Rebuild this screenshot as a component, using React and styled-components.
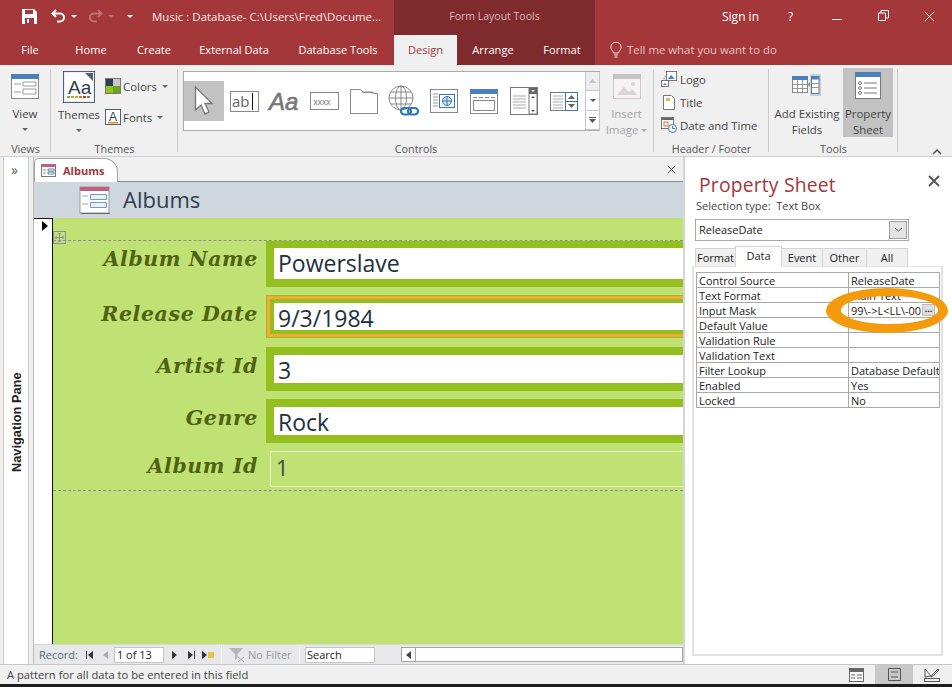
import React from "react";
import styled, { createGlobalStyle } from "styled-components";

const Global = createGlobalStyle`
  html, body { margin: 0; padding: 0; background: #f0f0f0; overflow: hidden; }
  * { box-sizing: border-box; }
  #root { width: 952px; height: 687px; }
`;
const Shell = styled.div`
  width: 952px; height: 687px; display: flex; flex-direction: column; overflow: hidden;
  font-family: "Open Sans", "Noto Sans", "Liberation Sans", sans-serif; font-size: 11.4px; color: #444;
  background: #f0f0f0; border-bottom: 3px solid #1c1c1c;
`;
const Title = styled.div`
  height: 35px; flex: none; background: #a4373a; display: flex; align-items: center; color: #fff; position: relative;
`;
const QuickAccess = styled.div`
  width: 152px; flex: none; display: flex; align-items: center; height: 100%; padding: 0 0 3px 22px;
`;
const FileName = styled.div`
  width: 242px; flex: none; font-size: 11.5px; color: #f6e9e9; white-space: nowrap; padding-bottom: 3px;
`;
const ContextTitle = styled.div`
  width: 201px; flex: none; height: 100%; background: #7f2a2d; color: #d9bcbd; font-size: 10.5px; padding-bottom: 3px;
  display: flex; align-items: center; justify-content: center;
`;
const TitleRight = styled.div`
  flex: 1; display: flex; align-items: center; height: 100%; padding: 0 0 3px 127px; color: #fff;
`;
const TitleText = styled.div`
  width: ${p => p.$w}px; flex: none; font-size: 12px;
`;
const TabsBar = styled.div`
  height: 30px; flex: none; background: #a4373a; display: flex; align-items: stretch;
`;
const Tab = styled.div`
  width: ${p => p.$w}px; flex: none; display: flex; align-items: center; justify-content: center;
  font-size: 11.1px; padding-bottom: 1px;
  color: ${p => (p.$active ? "#a4373a" : "#fff")};
  background: ${p => (p.$active ? "#f0f0f0" : p.$context ? "#7f2a2d" : "transparent")};
`;
const TellMe = styled.div`
  display: flex; align-items: center; gap: 5px; padding-left: 15px; color: #e3c5c6; font-size: 11.4px; padding-bottom: 1px;
`;
const Ribbon = styled.div`
  height: 92px; flex: none; display: flex; background: #f0f0f0; border-bottom: 1px solid #d0d0d0; position: relative;
`;
const Group = styled.div`
  width: ${p => p.$w}px; flex: none; position: relative; display: flex; flex-direction: column; padding-top: 3px;
  &::after { content: ""; position: absolute; right: 0; top: 4px; bottom: 4px; width: 1px; background: #c9c9c9; }
`;
const GroupBody = styled.div`
  flex: 1; display: flex; min-height: 0;
`;
const GroupLabel = styled.div`
  height: 15px; flex: none; text-align: center; font-size: 10.8px; color: #555; line-height: 15px;
`;
const BigButton = styled.div`
  width: ${p => p.$w}px; height: 69px; margin-left: ${p => p.$ml || 0}px; flex: none; display: flex; flex-direction: column; align-items: center;
  padding-top: ${p => p.$pt ?? 3}px; font-size: 11.4px; line-height: 15.5px; text-align: center; white-space: nowrap;
  color: ${p => (p.$off ? "#a5a5a5" : "#444")};
  background: ${p => (p.$on ? "#c2c2c2" : "transparent")};
  svg { flex: none; margin-bottom: ${p => p.$mb ?? 7}px; }
`;
const Caret = styled.span`
  display: inline-block; width: 0; height: 0; border-left: 3px solid transparent; border-right: 3px solid transparent;
  border-top: 3px solid ${p => p.$c || "#666"}; vertical-align: middle; margin-left: ${p => p.$ml ?? 3}px;
  margin-top: ${p => p.$mt || 0}px;
`;
const ThemeSide = styled.div`
  display: flex; flex-direction: column; gap: 13px; padding: 9px 0 0 1px;
`;
const SmallAction = styled.div`
  display: flex; align-items: center; gap: ${p => p.$gap ?? 3}px; height: 18px; font-size: 11.4px; color: #444;
  padding-left: ${p => p.$pl || 0}px;
`;
const Gallery = styled.div`
  width: 417px; height: 60px; margin: 3px 0 0 5px; display: flex; background: #fff; border: 1px solid #aaa; border-right: none; flex: none;
`;
const GalleryItem = styled.div`
  width: 40px; height: 40px; margin-top: 9px; flex: none; display: flex; align-items: center; justify-content: center;
  background: ${p => (p.$on ? "#c2c2c2" : "transparent")};
`;
const GalleryScroll = styled.div`
  width: 15px; flex: none; margin-left: 1px; display: flex; flex-direction: column; border: 1px solid #c6c6c6; border-width: 0 1px;
`;
const ScrollStep = styled.div`
  flex: 1; display: flex; align-items: center; justify-content: center; border-bottom: 1px solid #c6c6c6;
  background: ${p => (p.$off ? "#ededed" : "#fff")};
`;
const HeaderList = styled.div`
  display: flex; flex-direction: column; gap: 5px; padding: 2px 0 0 7px;
`;
const Collapse = styled.div`
  position: absolute; right: 10px; bottom: 3px; width: 10px; height: 10px;
`;
const Main = styled.div`
  flex: 1; min-height: 0; display: flex; background: #fff;
`;
const NavPane = styled.div`
  width: 34px; flex: none; display: flex; background: #f0f0f0;
`;
const NavInner = styled.div`
  width: 26px; margin-left: 3px; background: #fff; border-left: 1px solid #c6c6c6; border-right: 1px solid #c6c6c6;
  display: flex; flex-direction: column; align-items: center; position: relative;
`;
const NavChevron = styled.div`
  height: 24px; display: flex; align-items: center; color: #666; font-size: 14px; margin-left: -3px;
`;
const NavLabel = styled.div`
  flex: 1; display: flex; align-items: center; justify-content: center; writing-mode: vertical-rl; transform: rotate(180deg);
  font-weight: 700; font-size: 12.8px; color: #222; font-family: "Liberation Sans", sans-serif;
`;
const Doc = styled.div`
  width: 652px; flex: none; display: flex; flex-direction: column; min-width: 0; border-right: 2px solid #d5d5d5; border-left: 1px solid #b9b9b9; margin-left: -1px;
`;
const DocTabs = styled.div`
  height: 25px; flex: none; display: flex; align-items: flex-end; background: #f0f0f0; border-bottom: 1px solid #8c8c8c; position: relative;
`;
const DocTab = styled.div`
  width: 84px; height: 24px; margin-bottom: -1px; background: #fff; border: 1px solid #a5a5a5; border-bottom: none; border-radius: 5px 14px 0 0;
  display: flex; align-items: center; gap: 7px; padding-left: 6px; color: #a4373a; font-weight: 700; font-size: 11px;
`;
const DocClose = styled.div`
  position: absolute; right: 7px; top: 8px; width: 9px; height: 9px;
`;
const FormHeader = styled.div`
  height: 36px; flex: none; background: #cdd7dd; display: flex; align-items: center; padding-left: 45px; gap: 13px;
  color: #2f3e50;
`;
const FormHeaderText = styled.span`
  font-size: 22px; line-height: 30px; margin-top: -2px;
`;
const FormArea = styled.div`
  flex: 1; min-height: 0; display: flex; overflow: hidden;
`;
const Selector = styled.div`
  width: 19px; flex: none; background: #fff; border-right: 1px solid #111; border-top: 1px solid #111; padding: 2px 0 0 8px;
`;
const Body = styled.div`
  flex: 1; background: #c0e274; padding-top: 22px; position: relative; min-width: 0; overflow: hidden;
`;
const MoveHandle = styled.div`
  position: absolute; left: 0; top: 13px; width: 13px; height: 13px; border: 1px solid #8d8da0; display: flex; align-items: center; justify-content: center;
`;
const Section = styled.div`
  height: 251px; border-top: 1px dashed #8d8da0; border-bottom: 1px dashed #8d8da0; display: flex; flex-direction: column;
`;
const Row = styled.div`
  display: flex; flex: none; height: ${p => p.$h}px; margin-top: ${p => p.$mt || 0}px;
`;
const FieldLabel = styled.div`
  width: 205px; flex: none; text-align: right; font-family: "DejaVu Serif", serif; font-weight: 700; font-style: italic;
  font-size: 20.5px; line-height: ${p => p.$lh}px; color: #4f6312; white-space: nowrap; letter-spacing: .6px;
`;
const Control = styled.div`
  margin-left: 8px; flex: 1; min-width: 0; background: #93c01f; padding: ${p => p.$pt ?? 8}px 0 8px 8px; display: flex;
`;
const FocusedControl = styled.div`
  margin-left: 8px; flex: 1; min-width: 0; background: #93c01f; padding: 1px 0 1px 1px; display: flex;
`;
const FocusRing = styled.div`
  flex: 1; min-width: 0; display: flex; border: 3px solid #f6a937; border-right: none; padding: 4px 0 4px 4px;
`;
const ControlInput = styled.div`
  flex: 1; background: #fff; padding: ${p => (p.$pb ? 0 : 2)}px 0 ${p => p.$pb || 0}px 4px; display: flex; align-items: center; font-size: 23px; color: #22303c;
`;
const PlainControl = styled.div`
  margin-left: 12px; flex: 1; border: 1px solid #e8f3cc; border-right: none; padding: 0 0 5px 5px; display: flex; align-items: center; font-size: 22px; color: #3f4a55;
`;
const RecordBar = styled.div`
  height: 20px; flex: none; background: #e6e8ea; display: flex; align-items: center; border-top: 1px solid #d9d9d9; color: #5a6a7e; font-size: 11px; padding-left: 5px;
`;
const RecordNav = styled.span`
  display: inline-flex; width: ${p => p.$w}px; margin-left: ${p => p.$ml || 0}px; justify-content: center; flex: none; color: ${p => p.$off ? "#aaa" : "#333"};
`;
const RecordBox = styled.div`
  width: 50px; height: 16px; background: #fff; border: 1px solid #c4c4c4; color: #222; font-size: 11px; padding-left: 2px; line-height: 14px; flex: none;
`;
const Sep = styled.div`
  width: 1px; height: 19px; background: #fff; margin: 0 ${p => p.$r ?? 6}px 0 ${p => p.$l ?? 6}px; flex: none;
`;
const NoFilter = styled.div`
  display: flex; align-items: center; gap: 2px; color: #9a9a9a; flex: none; font-size: 11px; width: 65px; white-space: nowrap;
`;
const SearchBox = styled.div`
  width: 70px; height: 16px; background: #fff; border: 1px solid #c4c4c4; color: #222; font-size: 11px; line-height: 14px; padding-left: 1px; flex: none;
`;
const HScroll = styled.div`
  margin-left: 26px; flex: 1; height: 15px; background: #fff; border: 1px solid #a5a5a5; display: flex; margin-right: 0;
`;
const HStep = styled.div`
  width: 14px; border-right: 1px solid #a5a5a5; display: flex; align-items: center; justify-content: center;
`;
const Sheet = styled.div`
  flex: 1; min-width: 0; position: relative; background: #fff; padding: 14px 0 0 7px; display: flex; flex-direction: column;
`;
const SheetTitle = styled.div`
  font-size: 19.3px; color: #a4373a; padding-left: 7px; line-height: 27px; letter-spacing: .2px;
`;
const SheetClose = styled.div`
  position: absolute; right: 12px; top: 18px; width: 12px; height: 12px;
`;
const SelectionType = styled.div`
  font-size: 11px; color: #444; padding-left: 4px; line-height: 15px; white-space: pre;
`;
const Combo = styled.div`
  width: 214px; height: 22px; margin: 6px 0 0 3px; border: 1px solid #a8a8a8; display: flex; align-items: center; justify-content: space-between; padding: 0 1px 1px 3px;
  font-size: 11px; color: #222;
`;
const ComboBtn = styled.div`
  width: 18px; height: 18px; border: 1px solid #a0a0a0; background: #e4e4e4; display: flex; align-items: center; justify-content: center;
`;
const SheetTabs = styled.div`
  display: flex; align-items: flex-end; height: 20px; margin: 5px 0 0 4px; position: relative; z-index: 1;
`;
const SheetTab = styled.div`
  width: ${p => p.$w}px; flex: none; height: ${p => (p.$on ? 21 : 18)}px; background: ${p => (p.$on ? "#fff" : "#f0f0f0")};
  border: 1px solid #d4d4d4; border-bottom: ${p => (p.$on ? "1px solid #fff" : "none")}; text-align: center; font-size: 11px; color: #222;
  line-height: 17px; margin-bottom: ${p => (p.$on ? -1 : 0)}px; margin-left: -1px;
`;
const SheetPanel = styled.div`
  width: 251px; height: 390px; border: 2px solid #e2e2e2; border-top-width: 1px; padding: 5px 2px 0 2px; background: #fff; flex: none;
`;
const PropTable = styled.table`
  border-collapse: collapse; width: 244px; table-layout: fixed; font-size: 11px; color: #222;
  td { height: 15px; padding: 0 0 0 2px; border: 1px solid #a8a8a8; white-space: nowrap; overflow: hidden; line-height: 13px; }
  td:first-child { width: 152px; }
`;
const MaskCell = styled.div`
  display: flex; align-items: center; justify-content: space-between; height: 13px; padding-right: 4px;
`;
const MaskDots = styled.span`
  width: 13px; height: 12px; background: #dedede; border: 1px solid #bbb; font-size: 9px; line-height: 7px; text-align: center; font-weight: 700;
`;
const Annotation = styled.svg`
  position: absolute; left: 130px; top: 125px; pointer-events: none;
`;
const Status = styled.div`
  height: 20px; flex: none; display: flex; align-items: center; justify-content: space-between; background: #f0f0f0; border-top: 1px solid #c6c6c6;
  font-size: 11.2px; color: #444; padding-left: 7px;
`;
const ViewButtons = styled.div`
  display: flex; height: 100%; padding-right: 1px;
`;
const ViewBtn = styled.div`
  width: ${p => p.$w}px; flex: none; display: flex; align-items: center; justify-content: center; background: ${p => p.$on ? "#c8c8c8" : "transparent"};
`;

const Save = () => (
  <svg width="15" height="15" viewBox="0 0 15 15"><path d="M0 0h12l3 3v12H0z" fill="#fff"/><path d="M3 1h8v4H3zM3 9h9v6H3z" fill="#a4373a"/><path d="M5 10h2v4H5z" fill="#fff"/></svg>
);
const Undo = ({ c = "#fff", flip }) => (
  <svg width="15" height="14" viewBox="0 0 15 14" style={flip ? { transform: "scaleX(-1)" } : undefined}><path d="M5 1 1.500 4.500 5 8M2 4.500h7a4 4 0 0 1 0 8H6" fill="none" stroke={c} strokeWidth="2"/></svg>
);
const FormIcon = () => (
  <svg width="28" height="25" viewBox="0 0 28 25"><rect x=".5" y=".5" width="27" height="24" fill="#fff" stroke="#8a8a8a"/><rect width="28" height="5" fill="#4a80bb"/><path d="M3 10h7M3 18h7" stroke="#9a9a9a"/><path d="M12 8h13v4H12zM12 15h13v5H12z" fill="none" stroke="#9a9a9a"/></svg>
);
const ThemeIcon = () => (
  <svg width="32" height="32" viewBox="0 0 32 32"><rect x=".5" y=".5" width="31" height="31" fill="#e8eef3" stroke="#51606e"/><rect x="2" y="2" width="28" height="28" fill="#fff"/><path d="M22 2h8v8z" fill="#51606e"/><text x="5" y="23" fontFamily="Liberation Sans" fontSize="19" fill="#2b3f4f">Aa</text><path d="M4 25h3v2H4z" fill="#7bb32e"/><path d="M8 25h3v2H8z" fill="#93c01f"/><path d="M12 25h3v2h-3z" fill="#e0a020"/><path d="M16 25h3v2h-3z" fill="#e07020"/><path d="M20 25h3v2h-3z" fill="#c83020"/><path d="M24 25h3v2h-3z" fill="#887740"/></svg>
);
const ColorsIcon = () => (
  <svg width="16" height="16" viewBox="0 0 16 16"><rect x=".5" y=".5" width="15" height="15" fill="#fff" stroke="#777"/><path d="M1 1h7v7H1z" fill="#2b3f4f"/><path d="M8 1h7v7H8z" fill="#c8c8c8"/><path d="M1 8h7v7H1z" fill="#93c01f"/><path d="M8 8h7v7H8z" fill="#6fa21a"/></svg>
);
const FontsIcon = () => (
  <svg width="16" height="16" viewBox="0 0 16 16"><rect x=".5" y=".5" width="15" height="15" fill="#fff" stroke="#51606e"/><text x="4" y="12" fontFamily="Liberation Sans" fontSize="12" fill="#2b3f4f">A</text><path d="M3 13h10v1.500H3z" fill="#e68a1e"/></svg>
);
const Arrow = () => (
  <svg width="20" height="30" viewBox="0 0 20 30"><path d="M1.500 1v23l5.500-5 4 9 4-2-4-8.500h7z" fill="#fff" stroke="#777" strokeWidth="1.300"/></svg>
);
const AbIcon = () => (
  <svg width="29" height="21" viewBox="0 0 29 21"><rect x=".5" y=".5" width="28" height="20" fill="#fff" stroke="#888"/><text x="2" y="16" fontFamily="Open Sans" fontSize="15" fill="#666">ab</text><path d="M22.500 2v17" stroke="#111"/></svg>
);
const AaItalic = () => (
  <svg width="36" height="26" viewBox="0 0 36 26"><text x="3" y="22" fontFamily="Liberation Sans" fontStyle="italic" fontSize="24" fill="#777" stroke="#777" strokeWidth=".6">Aa</text></svg>
);
const XxxxIcon = () => (
  <svg width="29" height="18" viewBox="0 0 29 18"><rect x=".5" y=".5" width="28" height="17" fill="#fff" stroke="#888"/><text x="3.500" y="12.500" fontFamily="Liberation Sans" fontSize="8.500" fill="#777">xxxx</text></svg>
);
const FolderIcon = () => (
  <svg width="28" height="26" viewBox="0 0 28 26"><path d="M.5 25.500V1.500h10l3 3h9l1 1 4 0v20z" fill="#fff" stroke="#888"/><path d="M12 4h11v2" fill="none" stroke="#888"/></svg>
);
const GlobeIcon = () => (
  <svg width="32" height="32" viewBox="0 0 32 32"><circle cx="13" cy="13" r="12" fill="#fff" stroke="#888"/><ellipse cx="13" cy="13" rx="5.500" ry="12" fill="none" stroke="#888"/><path d="M1 13h24M3 7h20M3 19h20M13 1v24" stroke="#888" fill="none"/><rect x="13" y="23" width="10" height="6.500" rx="3.200" fill="none" stroke="#2f78b8" strokeWidth="2.200"/><rect x="20" y="23" width="10" height="6.500" rx="3.200" fill="none" stroke="#2f78b8" strokeWidth="2.200"/></svg>
);
const WebIcon = () => (
  <svg width="28" height="24" viewBox="0 0 28 24"><rect x=".5" y=".5" width="27" height="23" fill="#fff" stroke="#888"/><path d="M3 5h5M3 8h5M3 11h5M3 14h5M3 17h5" stroke="#999"/><rect x="9.500" y="5.500" width="15" height="13" fill="#fff" stroke="#3a78b5"/><circle cx="17" cy="12" r="4.500" fill="#cfe0f0" stroke="#3a78b5"/><path d="M12.500 12h9M17 7.500v9" stroke="#3a78b5"/></svg>
);
const TabIcon = () => (
  <svg width="28" height="25" viewBox="0 0 28 25"><rect x=".5" y=".5" width="27" height="24" fill="#fff" stroke="#888"/><rect width="28" height="5" fill="#4a80bb"/><path d="M3 8.500h22" stroke="#888" strokeDasharray="4 2"/><rect x="3.500" y="11.500" width="21" height="10" fill="none" stroke="#888"/></svg>
);
const ComboIcon = () => (
  <svg width="28" height="28" viewBox="0 0 28 28"><rect x=".5" y=".5" width="27" height="27" fill="#fff" stroke="#777"/><rect x="19" y="1" width="8" height="26" fill="#fff" stroke="#777"/><path d="M19 1h8v6h-8z" fill="#666"/><path d="m21 3 2 2 2-2z" fill="#fff"/><path d="m21 11 2-2 2 2zM21 23l2 2 2-2z" fill="#555"/><path d="M3 9h13M3 12h13M3 15h13M3 18h13M3 21h13" stroke="#aaa"/></svg>
);
const SpinIcon = () => (
  <svg width="28" height="19" viewBox="0 0 28 19"><rect x=".5" y=".5" width="27" height="18" fill="#fff" stroke="#777"/><rect x="15.500" y=".5" width="12" height="18" fill="#fff" stroke="#3a78b5"/><path d="M15 9.500h13" stroke="#3a78b5"/><path d="m18 7 3.500-4L25 7zM18 12l3.500 4 3.500-4z" fill="#666"/><path d="M3 4h10M3 7h10M3 10h10M3 13h10M3 16h10" stroke="#aaa"/></svg>
);
const ImageIcon = () => (
  <svg width="28" height="25" viewBox="0 0 28 25"><rect x=".5" y=".5" width="27" height="24" fill="#f7f2f4" stroke="#cfc7cb"/><rect width="28" height="5" fill="#c7c3c5"/><path d="M4 21l7-8 5 5 3-3 5 6z" fill="#dcd3d7"/><circle cx="20" cy="10" r="2" fill="#dcd3d7"/></svg>
);
const LogoIcon = () => (
  <svg width="16" height="16" viewBox="0 0 16 16"><rect x="5.500" y=".5" width="10" height="9" fill="#fff" stroke="#777"/><path d="M7 8l3-4 2 2 2 2z" fill="#4a80bb"/><rect x=".5" y="9.500" width="7" height="6" fill="#fff" stroke="#777"/><path d="M2 14l2-2 2 2z" fill="#4a80bb"/><path d="M3 8l2-4" stroke="#777" strokeDasharray="1 1"/></svg>
);
const TitleIcon = () => (
  <svg width="12" height="15" viewBox="0 0 12 15"><path d="M.5.5h8l3 3v11H.5z" fill="#fff" stroke="#777"/><path d="M3 3h4v3H3z" fill="#e9b56a"/></svg>
);
const DateIcon = () => (
  <svg width="16" height="16" viewBox="0 0 16 16"><rect x=".5" y=".5" width="12" height="11" fill="#fff" stroke="#777"/><rect x="1" y="1" width="11" height="2" fill="#666"/><rect x="3" y="5" width="4" height="4" fill="none" stroke="#e07020"/><circle cx="11.500" cy="11.500" r="4" fill="#fff" stroke="#3a78b5"/><path d="M11.500 9v2.500H14" fill="none" stroke="#3a78b5"/></svg>
);
const FieldsIcon = () => (
  <svg width="30" height="22" viewBox="0 0 30 22"><rect x=".5" y="2.500" width="15" height="16" fill="#fff" stroke="#888"/><rect y="2" width="16" height="4" fill="#4a80bb"/><path d="M5.500 6v12M10.500 6v12M1 10.500h14M1 14.500h14" stroke="#999"/><path d="M15 10.500l5-4v8z" fill="#6fa890"/><rect x="18" y="0" width="11" height="22" fill="#bcd4e8"/><rect x="19.500" y="2.500" width="7.500" height="17" fill="#fff" stroke="#777"/><rect x="19.500" y="2.500" width="7.500" height="3" fill="#4a80bb"/><path d="M20 9.500h7M20 13.500h7" stroke="#999"/></svg>
);
const SheetIcon = () => (
  <svg width="26" height="27" viewBox="0 0 26 27"><rect x=".5" y=".5" width="25" height="26" fill="#fff" stroke="#777"/><rect width="26" height="5" fill="#4a80bb"/><circle cx="5" cy="11" r="1.500" fill="none" stroke="#777"/><circle cx="5" cy="16" r="1.500" fill="none" stroke="#777"/><circle cx="5" cy="21" r="1.500" fill="none" stroke="#777"/><path d="M9 11h13M9 16h13M9 21h13" stroke="#777"/></svg>
);
const Bulb = () => (
  <svg width="12" height="16" viewBox="0 0 12 16"><path d="M3.500 11C3 8.500.8 7.800.8 5.300a5.200 5.200 0 0 1 10.400 0c0 2.500-2.200 3.200-2.700 5.700zM4 13h4M4.500 15h3" fill="none" stroke="#f3e4e4"/></svg>
);
const X = ({ c = "#555", w = 1.5 }) => (
  <svg width="100%" height="100%" viewBox="0 0 12 12" style={{ display: "block" }}><path d="M1 1l10 10M11 1 1 11" stroke={c} strokeWidth={w}/></svg>
);
const Tri = ({ d = "r", c = "#333" }) => (
  <svg width="5" height="8" viewBox="0 0 5 8"><path d={d === "r" ? "M0 0l5 4-5 4z" : "M5 0 0 4l5 4z"} fill={c}/></svg>
);

export default function App() {
  const props = [
    ["Control Source", "ReleaseDate"], ["Text Format", "Plain Text"], ["Input Mask", null], ["Default Value", ""],
    ["Validation Rule", ""], ["Validation Text", ""], ["Filter Lookup", "Database Default"], ["Enabled", "Yes"], ["Locked", "No"],
  ];
  return (
    <Shell>
      <Global />
      <Title>
        <QuickAccess>
          <Save />
          <span style={{ width: 14 }} />
          <Undo />
          <Caret $c="#fff" $ml={5} />
          <span style={{ width: 11 }} />
          <Undo c="#c07072" flip />
          <Caret $c="#c07072" $ml={5} />
          <span style={{ width: 13 }} />
          <Caret $c="#fff" $ml={0} />
        </QuickAccess>
        <FileName>Music : Database- C:\Users\Fred\Docume...</FileName>
        <ContextTitle>Form Layout Tools</ContextTitle>
        <TitleRight>
          <TitleText $w={66}>Sign in</TitleText>
          <TitleText $w={44}>?</TitleText>
          <TitleText $w={46}><svg width="10" height="2"><rect width="10" height="1" fill="#fff" /></svg></TitleText>
          <TitleText $w={46}><svg width="11" height="11" viewBox="0 0 11 11"><path d="M.5 3h7v7.500h-7zM3 3V.5h7.500V8H8" fill="none" stroke="#fff" /></svg></TitleText>
          <TitleText $w={12}><div style={{ width: 11, height: 11 }}><X c="#fff" w={1} /></div></TitleText>
        </TitleRight>
      </Title>
      <TabsBar>
        <Tab $w={60}>File</Tab>
        <Tab $w={62}>Home</Tab>
        <Tab $w={64}>Create</Tab>
        <Tab $w={96}>External Data</Tab>
        <Tab $w={112}>Database Tools</Tab>
        <Tab $w={63} $active>Design</Tab>
        <Tab $w={72} $context>Arrange</Tab>
        <Tab $w={66} $context>Format</Tab>
        <TellMe><Bulb />Tell me what you want to do</TellMe>
      </TabsBar>
      <Ribbon>
        <Group $w={51}>
          <GroupBody><BigButton $w={50} $pt={6}><FormIcon />View<Caret $ml={0} $mt={6} /></BigButton></GroupBody>
          <GroupLabel>Views</GroupLabel>
        </Group>
        <Group $w={127}>
          <GroupBody>
            <BigButton $w={50} $ml={3} $pt={3} $mb={4}><ThemeIcon />Themes<Caret $ml={0} $mt={6} /></BigButton>
            <ThemeSide>
              <SmallAction $gap={2}><ColorsIcon />Colors<Caret /></SmallAction>
              <SmallAction $gap={2}><FontsIcon />Fonts<Caret /></SmallAction>
            </ThemeSide>
          </GroupBody>
          <GroupLabel>Themes</GroupLabel>
        </Group>
        <Group $w={476}>
          <GroupBody>
            <Gallery>
              <GalleryItem $on><Arrow /></GalleryItem>
              <GalleryItem><AbIcon /></GalleryItem>
              <GalleryItem><AaItalic /></GalleryItem>
              <GalleryItem><XxxxIcon /></GalleryItem>
              <GalleryItem><FolderIcon /></GalleryItem>
              <GalleryItem><GlobeIcon /></GalleryItem>
              <GalleryItem><WebIcon /></GalleryItem>
              <GalleryItem><TabIcon /></GalleryItem>
              <GalleryItem><ComboIcon /></GalleryItem>
              <GalleryItem><SpinIcon /></GalleryItem>
              <GalleryScroll>
                <ScrollStep $off><svg width="7" height="4"><path d="M0 4l3.500-4L7 4z" fill="#c4c4c4" /></svg></ScrollStep>
                <ScrollStep><Caret $ml={0} $c="#555" /></ScrollStep>
                <ScrollStep><svg width="7" height="6"><path d="M0 0h7v1H0zM0 2l3.500 4L7 2z" fill="#555" /></svg></ScrollStep>
              </GalleryScroll>
            </Gallery>
            <BigButton $w={53} $off $pt={6} $ml={0}><ImageIcon />Insert<span>Image<Caret $c="#aaa" /></span></BigButton>
          </GroupBody>
          <GroupLabel>Controls</GroupLabel>
        </Group>
        <Group $w={115}>
          <GroupBody>
            <HeaderList>
              <SmallAction><LogoIcon />Logo</SmallAction>
              <SmallAction $gap={5} $pl={2}><TitleIcon />Title</SmallAction>
              <SmallAction><DateIcon />Date and Time</SmallAction>
            </HeaderList>
          </GroupBody>
          <GroupLabel>Header / Footer</GroupLabel>
        </Group>
        <Group $w={129}>
          <GroupBody>
            <BigButton $w={68} $ml={4} $pt={6} $mb={10}><FieldsIcon />Add Existing<span>Fields</span></BigButton>
            <BigButton $w={50} $ml={2} $pt={4} $on><SheetIcon />Property<span>Sheet</span></BigButton>
          </GroupBody>
          <GroupLabel>Tools</GroupLabel>
        </Group>
        <Collapse><svg width="10" height="6"><path d="M1 5l4-4 4 4" fill="none" stroke="#555" strokeWidth="1.500" /></svg></Collapse>
      </Ribbon>
      <Main>
        <NavPane>
          <NavInner>
            <NavChevron>»</NavChevron>
            <NavLabel>Navigation Pane</NavLabel>
          </NavInner>
        </NavPane>
        <Doc>
          <DocTabs>
            <DocTab>
              <svg width="15" height="13" viewBox="0 0 15 13"><rect x=".5" y=".5" width="14" height="12" fill="#fff" stroke="#777" /><rect width="15" height="3" fill="#c25f7d" /><path d="M2 6h3M2 9h3" stroke="#888" /><path d="M7 5h6v2H7zM7 8h6v2H7z" fill="none" stroke="#5a86b5" /></svg>
              Albums
            </DocTab>
            <DocClose><X c="#444" w={1.300} /></DocClose>
          </DocTabs>
          <FormHeader>
            <svg width="31" height="28" viewBox="0 0 31 28"><rect x="1" y="1" width="29" height="26" fill="#fff" stroke="#999" /><rect x="1" y="1" width="29" height="4" fill="#c25f7d" /><path d="M3 10h6M3 18h6" stroke="#9ab" /><path d="M11.500 8.500h16v5h-16zM11.500 16.500h16v5h-16z" fill="#e8f0f8" stroke="#7a9cc0" /><path d="M2 27.500h29" stroke="#666" /></svg>
            <FormHeaderText>Albums</FormHeaderText>
          </FormHeader>
          <FormArea>
            <Selector><svg width="6" height="10" viewBox="0 0 6 10" style={{ display: "block" }}><path d="M0 0l6 5-6 5z" fill="#000" /></svg></Selector>
            <Body>
              <MoveHandle><svg width="9" height="9" viewBox="0 0 9 9"><path d="M4.500 0v9M0 4.500h9M3 1.500 4.500 0 6 1.500M3 7.500 4.500 9 6 7.500M1.500 3 0 4.500 1.500 6M7.500 3 9 4.500 7.500 6" fill="none" stroke="#8d8da0" /></svg></MoveHandle>
              <Section>
                <Row $h={46}>
                  <FieldLabel $lh={36}>Album Name</FieldLabel>
                  <Control $pt={7}><ControlInput $pb={2}>Powerslave</ControlInput></Control>
                </Row>
                <Row $h={43} $mt={8}>
                  <FieldLabel $lh={38}>Release Date</FieldLabel>
                  <FocusedControl><FocusRing><ControlInput>9/3/1984</ControlInput></FocusRing></FocusedControl>
                </Row>
                <Row $h={44} $mt={9}>
                  <FieldLabel $lh={38}>Artist Id</FieldLabel>
                  <Control><ControlInput>3</ControlInput></Control>
                </Row>
                <Row $h={44} $mt={8}>
                  <FieldLabel $lh={38}>Genre</FieldLabel>
                  <Control><ControlInput>Rock</ControlInput></Control>
                </Row>
                <Row $h={36} $mt={8}>
                  <FieldLabel $lh={30}>Album Id</FieldLabel>
                  <PlainControl>1</PlainControl>
                </Row>
              </Section>
            </Body>
          </FormArea>
          <RecordBar>
            Record:
            <RecordNav $w={17} $ml={3}><svg width="7" height="8" viewBox="0 0 7 8"><path d="M0 0h1v8H0zM7 0 2 4l5 4z" fill="#333" /></svg></RecordNav>
            <RecordNav $w={16} $off><Tri d="l" c="#aaa" /></RecordNav>
            <RecordBox>1 of 13</RecordBox>
            <RecordNav $w={17} $ml={2}><Tri /></RecordNav>
            <RecordNav $w={17}><svg width="7" height="8" viewBox="0 0 7 8"><path d="M0 0l5 4-5 4zM6 0h1v8H6z" fill="#333" /></svg></RecordNav>
            <RecordNav $w={13} $ml={2}><svg width="13" height="8" viewBox="0 0 13 8"><path d="M0 0l5 4-5 4z" fill="#333" /><path d="M6 1h6v6H6z" fill="#e5c543" /></svg></RecordNav>
            <Sep />
            <NoFilter>
              <svg width="18" height="16" viewBox="0 0 18 16"><path d="M1 1h14L9.500 7v4L7 13V7z" fill="#b5b5b5" /><path d="M10 10l6 5M16 10l-6 5" stroke="#aaa" /></svg>
              No Filter
            </NoFilter>
            <Sep $l={6} $r={5} />
            <SearchBox>Search</SearchBox>
            <HScroll><HStep><Tri d="l" c="#444" /></HStep></HScroll>
          </RecordBar>
        </Doc>
        <Sheet>
          <SheetTitle>Property Sheet</SheetTitle>
          <SheetClose><X c="#555" w={1.800} /></SheetClose>
          <SelectionType>{"Selection type:  Text Box"}</SelectionType>
          <Combo>ReleaseDate<ComboBtn><svg width="9" height="5"><path d="M1 1l3.500 3L8 1" fill="none" stroke="#555" /></svg></ComboBtn></Combo>
          <SheetTabs>
            <SheetTab $w={41}>Format</SheetTab>
            <SheetTab $w={47} $on>Data</SheetTab>
            <SheetTab $w={42}>Event</SheetTab>
            <SheetTab $w={45}>Other</SheetTab>
            <SheetTab $w={42}>All</SheetTab>
          </SheetTabs>
          <SheetPanel>
            <PropTable>
              <tbody>
                {props.map(([k, v]) => (
                  <tr key={k}>
                    <td>{k}</td>
                    <td>{v === null ? <MaskCell>99\-&gt;L&lt;LL\-00<MaskDots>...</MaskDots></MaskCell> : v}</td>
                  </tr>
                ))}
              </tbody>
            </PropTable>
          </SheetPanel>
          <Annotation width="140" height="60" viewBox="0 0 140 60">
            <path fillRule="evenodd" fill="#f39a0d" d="M11 28.500a61 22.500 0 1 0 122 0a61 22.500 0 1 0-122 0zM26 28a48.500 14 0 1 0 97 0a48.500 14 0 1 0-97 0z" />
          </Annotation>
        </Sheet>
      </Main>
      <Status>
        A pattern for all data to be entered in this field
        <ViewButtons>
          <ViewBtn $w={38}>
            <svg width="15" height="14" viewBox="0 0 15 14"><rect x=".5" y=".5" width="14" height="13" fill="#fff" stroke="#666" /><rect width="15" height="4" fill="#666" /><path d="M2 7h4M2 10h4M8 7h5M8 10h5" stroke="#666" /></svg>
          </ViewBtn>
          <ViewBtn $w={38} $on>
            <svg width="13" height="13" viewBox="0 0 13 13"><path d="M.5.5h12v12H.5zM3 4h7M3 9h7" fill="none" stroke="#555" /></svg>
          </ViewBtn>
          <ViewBtn $w={38}>
            <svg width="16" height="14" viewBox="0 0 16 14"><path d="M1 1v8l6-1zM15 2l-6 6-2 1 1-2 6-6z" fill="none" stroke="#555" /><rect x=".5" y="10.500" width="15" height="3" fill="none" stroke="#555" /></svg>
          </ViewBtn>
        </ViewButtons>
      </Status>
    </Shell>
  );
}
